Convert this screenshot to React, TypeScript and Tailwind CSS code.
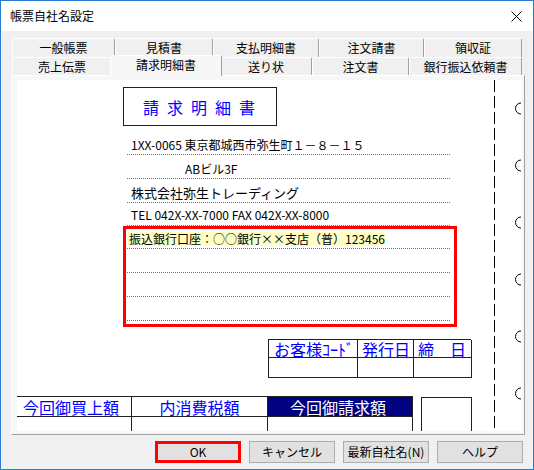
import React from "react";

function DotRow({ className, children }: { className: string; children?: React.ReactNode }) {
  return (
    <div className={`flex items-end border-b border-dotted border-[#707070] ${className}`}>
      {children}
    </div>
  );
}

function Ring() {
  return (
    <svg width="9" height="13" viewBox="0 0 9 13" className="shrink-0">
      <path d="M7 1 A5.5 5.5 0 0 0 7 12" fill="none" stroke="#000" strokeWidth="1" />
    </svg>
  );
}

export default function App() {
  const backTabs = [
    { label: "一般帳票", w: "w-[103px]" },
    { label: "見積書", w: "w-[98px]" },
    { label: "支払明細書", w: "w-[106px]" },
    { label: "注文請書", w: "w-[105px]" },
    { label: "領収証", w: "w-[98px]" },
  ];

  return (
    <div className="flex h-[470px] w-[534px] flex-col border border-[#2b7bd3] bg-[#f0f0f0] font-['Noto_Sans_CJK_JP',sans-serif] text-[12px] leading-none text-black">
      {/* title bar */}
      <div className="flex h-[30px] shrink-0 items-center justify-between bg-white pl-[9px] pr-[11px]">
        <span className="text-[12px]">帳票自社名設定</span>
        <svg width="11" height="11" viewBox="0 0 11 11">
          <path d="M0.5 0.5 L10.5 10.5 M10.5 0.5 L0.5 10.5" stroke="#000" strokeWidth="1" />
        </svg>
      </div>

      <div className="flex flex-1 flex-col pl-[10px] pr-[8px] pt-[7px]">
        {/* tabs row 1 */}
        <div className="ml-px flex h-[19px] shrink-0">
          {backTabs.map((t) => (
            <div
              key={t.label}
              className={`flex ${t.w} items-start justify-center rounded-t-[2px] border-l border-t border-r border-white border-r-[#a0a0a0] pt-[3px]`}
            >
              {t.label}
            </div>
          ))}
        </div>

        {/* tabs row 2 */}
        <div className="ml-px flex h-[18px] shrink-0 items-end">
          <div className="flex h-[18px] w-[100px] items-center justify-center rounded-t-[2px] border-l border-t border-r border-white border-r-[#a0a0a0]">
            売上伝票
          </div>
          <div className="relative z-10 -mx-[2px] -mb-px flex h-[21px] w-[112px] items-start justify-center rounded-t-[2px] border-l border-t border-r border-white border-r-[#a0a0a0] bg-[#f7f7f7] pt-[3px]">
            請求明細書
          </div>
          <div className="flex h-[18px] w-[92px] items-center justify-center rounded-t-[2px] border-l border-t border-r border-white border-r-[#a0a0a0]">
            送り状
          </div>
          <div className="flex h-[18px] w-[97px] items-center justify-center rounded-t-[2px] border-l border-t border-r border-white border-r-[#a0a0a0]">
            注文書
          </div>
          <div className="flex h-[18px] w-[113px] items-center justify-center rounded-t-[2px] border-l border-t border-r border-white border-r-[#a0a0a0]">
            銀行振込依頼書
          </div>
        </div>

        {/* tab panel */}
        <div className="h-[360px] shrink-0 border-l border-t border-r border-b border-white border-r-[#a0a0a0] border-b-[#a0a0a0] bg-[#f7f7f7] pb-[3px] pl-[5px] pr-[2px] pt-[4px]">
          <div className="flex h-[351px] overflow-hidden bg-white">
            {/* document */}
            <div className="w-[477px] shrink-0">
              <div className="ml-[106px] mt-[7px] flex h-[39px] w-[154px] items-center justify-center border border-[#202020] pl-[6px] text-[16px] tracking-[8px] text-[#0000ff]">
                請求明細書
              </div>

              <div className="ml-[110px] mt-[5px] w-[323px]">
                <DotRow className="h-[24px] pb-[3px] pl-[4px]">
                  1XX-0065 東京都城西市弥生町１－８－１５
                </DotRow>
                <DotRow className="h-[24px] pb-[3px] pl-[58px]">ABビル3F</DotRow>
                <DotRow className="h-[24px] pb-[3px] pl-[4px] text-[13px]">
                  株式会社弥生トレーディング
                </DotRow>
                <DotRow className="h-[23px] pb-[4px] pl-[4px]">
                  TEL 042X-XX-7000 FAX 042X-XX-8000
                </DotRow>
              </div>

              <div className="ml-[106px] w-[334px] border-[3px] border-[#ff0000] pb-[3px] pl-px pr-[4px]">
                <DotRow className="h-[20px] pb-[2px] pl-px">
                  <span className="bg-[#ffffc4] px-px py-px">振込銀行口座：○○銀行××支店（普）123456</span>
                </DotRow>
                <DotRow className="h-[24px]" />
                <DotRow className="h-[24px]" />
                <DotRow className="h-[24px]" />
              </div>

              <div className="ml-[251px] mt-[12px] grid w-[203px] grid-cols-[89px_56px_58px] border-l border-t border-[#202020] text-[16px] text-[#0000ff]">
                <div className="flex h-[18px] items-center border-b border-r border-[#202020] pl-[5px]">お客様ｺｰﾄﾞ</div>
                <div className="flex h-[18px] items-center border-b border-r border-[#202020] pl-[4px]">発行日</div>
                <div className="flex h-[18px] items-center justify-between border-b border-r border-[#202020] pl-[4px] pr-[5px]">
                  <span>締</span>
                  <span>日</span>
                </div>
                <div className="h-[20px] border-b border-r border-[#202020]" />
                <div className="h-[20px] border-b border-r border-[#202020]" />
                <div className="h-[20px] border-b border-r border-[#202020]" />
              </div>

              <div className="mt-[18px] flex items-start">
                <div className="grid grid-cols-[115px_136px_145px] border-t border-[#202020] text-[16px]">
                  <div className="flex h-[20px] items-center border-b border-r border-[#202020] pl-[6px] text-[#0000ff]">今回御買上額</div>
                  <div className="flex h-[20px] items-center justify-center border-b border-r border-[#202020] text-[#0000ff]">内消費税額</div>
                  <div className="flex h-[20px] items-center justify-center border-b border-r border-[#202020] bg-[#000080] pr-[4px] text-white">今回御請求額</div>
                  <div className="h-[40px] border-r border-[#202020]" />
                  <div className="h-[40px] border-r border-[#202020]" />
                  <div className="h-[40px] border-r border-[#202020]" />
                </div>
                <div className="ml-[8px] mt-px h-[40px] w-[51px] border border-[#202020]" />
              </div>
            </div>

            {/* perforation */}
            <svg width="1" height="351" className="shrink-0">
              <line x1="0.5" y1="0" x2="0.5" y2="351" stroke="#000" strokeWidth="1" strokeDasharray="12 4" />
            </svg>
            <div className="flex flex-col gap-[44px] pl-[19px] pt-[22px]">
              <Ring />
              <Ring />
              <Ring />
              <Ring />
              <Ring />
              <Ring />
            </div>
          </div>
        </div>

        {/* buttons */}
        <div className="mt-[6px] flex justify-end gap-[8px] pr-[2px]">
          <button className="h-[22px] w-[86px] border-[3px] border-[#ff0000] bg-[#e1e1e1]">OK</button>
          <button className="h-[22px] w-[86px] border border-[#adadad] bg-[#e1e1e1]">キャンセル</button>
          <button className="h-[22px] w-[86px] border border-[#adadad] bg-[#e1e1e1]">最新自社名(N)</button>
          <button className="h-[22px] w-[86px] border border-[#adadad] bg-[#e1e1e1]">ヘルプ</button>
        </div>
      </div>
    </div>
  );
}
